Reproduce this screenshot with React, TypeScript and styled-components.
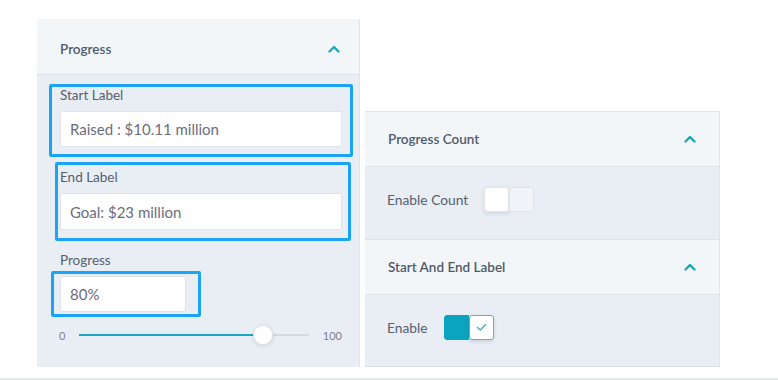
import React from "react";
import styled, { createGlobalStyle } from "styled-components";

const Global = createGlobalStyle`
  html, body { margin: 0; padding: 0; background: #ffffff; }
  body { font-family: Lato, "Open Sans", sans-serif; -webkit-font-smoothing: antialiased; }
  * { box-sizing: border-box; }
`;

const Page = styled.div`
  width: 778px;
  height: 380px;
  display: flex;
  flex-direction: column;
`;

const Stage = styled.div`
  flex: 1;
  display: flex;
  align-items: flex-start;
  padding: 19px 0 0 37px;
  gap: 6px;
`;

const BottomRule = styled.div`
  height: 2px;
  background: #e6e8eb;
`;

const Panel = styled.section<{ $w: number; $top?: number }>`
  width: ${(p) => p.$w}px;
  margin-top: ${(p) => p.$top ?? 0}px;
  display: flex;
  flex-direction: column;
  background: #e9eef5;
  box-shadow: 1px 0 0 #dfe4ea;
`;

const Header = styled.div<{ $topBorder?: boolean; $padTop?: number; $padRight?: number }>`
  height: 56px;
  display: flex;
  align-items: center;
  justify-content: space-between;
  padding: ${(p) => p.$padTop ?? 0}px ${(p) => p.$padRight ?? 23}px 0 23px;
  background: #f3f6f9;
  border-top: ${(p) => (p.$topBorder ? "1px solid #dde3ea" : "none")};
  border-bottom: 1px solid #dde3ea;
  font-size: 13.5px;
  font-weight: 600;
  color: #4f5a6b;
`;

const Body = styled.div`
  display: flex;
  flex-direction: column;
  padding: 12px 17px 22px 23px;
  gap: 22px;
`;

const RowBody = styled.div<{ $last?: boolean }>`
  height: 72px;
  display: flex;
  align-items: flex-start;
  gap: 16px;
  padding: 20px 22px 0;
  font-size: 13.8px;
  color: #56606f;
  border-bottom: ${(p) => (p.$last ? "1px solid #d9dfe6" : "none")};
`;

const RowText = styled.span`
  line-height: 25px;
`;

const Field = styled.div`
  position: relative;
  display: flex;
  flex-direction: column;
  gap: 8px;
`;

const Label = styled.div`
  font-size: 13.5px;
  line-height: 16px;
  color: #56606f;
`;

const Input = styled.div<{ $w?: number; $h?: number }>`
  width: ${(p) => (p.$w ? `${p.$w}px` : "100%")};
  height: ${(p) => p.$h ?? 36}px;
  background: #ffffff;
  border: 1px solid #dfe4ea;
  border-radius: 2px;
  display: flex;
  align-items: center;
  padding: 0 9px;
  font-size: 15px;
  color: #6b6d7d;
`;

const Highlight = styled.div<{ $t: number; $l: number; $r: number; $b: number }>`
  position: absolute;
  top: ${(p) => p.$t}px;
  left: ${(p) => p.$l}px;
  right: ${(p) => p.$r}px;
  bottom: ${(p) => p.$b}px;
  border: 3px solid #1aa3f7;
  border-radius: 2px;
  pointer-events: none;
`;

const SliderRow = styled.div`
  height: 20px;
  margin-top: -9px;
  display: flex;
  align-items: center;
  font-size: 11px;
  color: #7a8190;
  margin-left: -1px;
`;

const RangeEnd = styled.span<{ $side: "min" | "max" }>`
  margin-right: ${(p) => (p.$side === "min" ? 14 : 0)}px;
  margin-left: ${(p) => (p.$side === "max" ? 14 : 0)}px;
`;

const Track = styled.div`
  position: relative;
  flex: 1;
  height: 2px;
  background: #d3d9e0;
`;

const Fill = styled.div`
  position: absolute;
  left: 0;
  top: 0;
  height: 2px;
  background: #1aa8c4;
`;

const Thumb = styled.div`
  position: absolute;
  top: -9px;
  width: 20px;
  height: 20px;
  margin-left: -10px;
  border-radius: 50%;
  background: #ffffff;
  border: 1px solid #e2e6eb;
  box-shadow: 0 1px 4px rgba(0, 0, 0, 0.12);
`;

const Toggle = styled.div`
  width: 50px;
  height: 25px;
  display: flex;
  border-radius: 3px;
`;

const Half = styled.div<{ $kind: "knob" | "off" | "on" | "check" }>`
  width: 25px;
  height: 25px;
  display: flex;
  align-items: center;
  justify-content: center;
  border-radius: 3px;
  background: ${(p) =>
    p.$kind === "on" ? "#0ba3bf" : p.$kind === "off" ? "#f1f4f8" : "#ffffff"};
  border: 1px solid
    ${(p) => (p.$kind === "check" ? "#49b9cf" : p.$kind === "on" ? "#0ba3bf" : "#dfe4ea")};
  box-shadow: ${(p) =>
    p.$kind === "knob" || p.$kind === "check" ? "0 2px 4px rgba(40,60,90,0.14)" : "none"};
  border-top-right-radius: ${(p) => (p.$kind === "on" ? 0 : 3)}px;
  border-bottom-right-radius: ${(p) => (p.$kind === "on" ? 0 : 3)}px;
`;

const Chevron = () => (
  <svg width="12" height="8" viewBox="0 0 12 8" fill="none">
    <path d="M1.5 6.5 L6 2 L10.5 6.5" stroke="#1ba5bf" strokeWidth="2.4" strokeLinecap="round" strokeLinejoin="round" />
  </svg>
);

const Check = () => (
  <svg width="11" height="9" viewBox="0 0 11 9" fill="none">
    <path d="M1.5 4.5 L4.3 7 L9.5 1.8" stroke="#3fb3ca" strokeWidth="1.5" strokeLinecap="round" strokeLinejoin="round" />
  </svg>
);

export default function App() {
  const progress = 80;
  return (
    <Page>
      <Global />
      <Stage>
        <Panel $w={322}>
          <Header $padTop={5} $padRight={19}>
            <span>Progress</span>
            <Chevron />
          </Header>
          <Body>
            <Field>
              <Label>Start Label</Label>
              <Input>Raised : $10.11 million</Input>
              <Highlight $t={-3} $l={-11} $r={-11} $b={-10} />
            </Field>
            <Field>
              <Label>End Label</Label>
              <Input $h={37}>Goal: $23 million</Input>
              <Highlight $t={-7} $l={-5} $r={-9} $b={-11} />
            </Field>
            <Field>
              <Label>Progress</Label>
              <Input $w={126} $h={36}>80%</Input>
              <Highlight $t={19} $l={-9} $r={141} $b={-5} />
            </Field>
            <SliderRow>
              <RangeEnd $side="min">0</RangeEnd>
              <Track>
                <Fill style={{ width: `${progress}%` }} />
                <Thumb style={{ left: `${progress}%` }} />
              </Track>
              <RangeEnd $side="max">100</RangeEnd>
            </SliderRow>
          </Body>
        </Panel>
        <Panel $w={354} $top={92}>
          <Header $topBorder>
            <span>Progress Count</span>
            <Chevron />
          </Header>
          <RowBody>
            <RowText>Enable Count</RowText>
            <Toggle>
              <Half $kind="knob" />
              <Half $kind="off" />
            </Toggle>
          </RowBody>
          <Header $topBorder>
            <span>Start And End Label</span>
            <Chevron />
          </Header>
          <RowBody $last>
            <RowText>Enable</RowText>
            <Toggle>
              <Half $kind="on" />
              <Half $kind="check">
                <Check />
              </Half>
            </Toggle>
          </RowBody>
        </Panel>
      </Stage>
      <BottomRule />
    </Page>
  );
}
